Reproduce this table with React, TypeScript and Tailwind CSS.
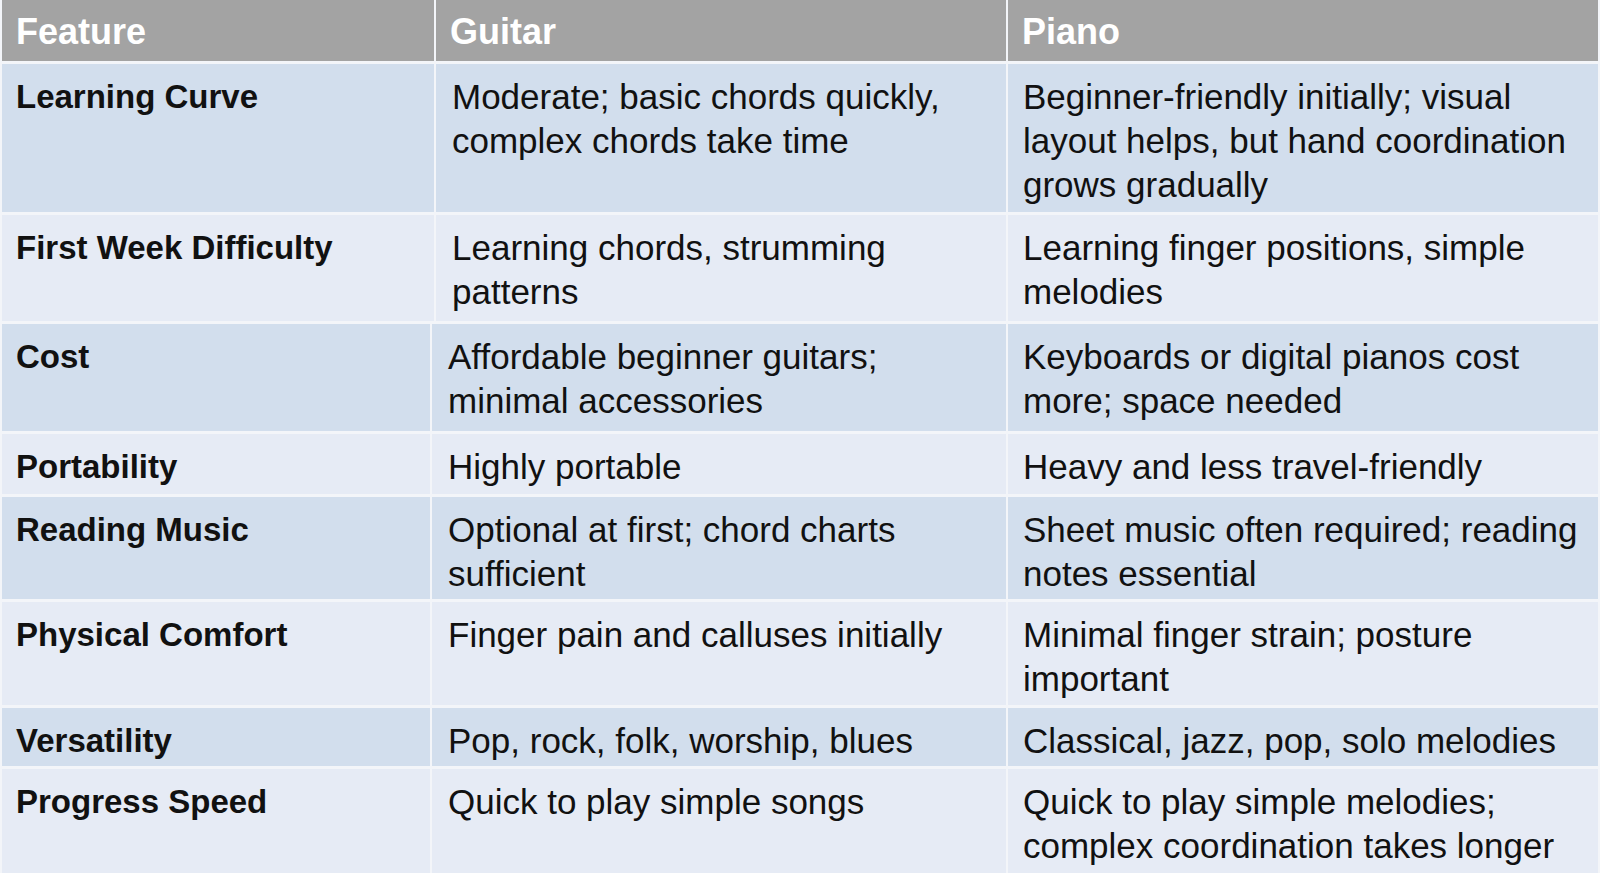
import React from "react";

type Row = {
  label: string;
  guitar: string[];
  piano: string[];
  h: string;
  bg: string;
  narrow?: boolean;
};

const BLUE = "bg-[#d2deed]";
const LIGHT = "bg-[#e6ebf5]";

const rows: Row[] = [
  {
    label: "Learning Curve",
    guitar: ["Moderate; basic chords quickly,", "complex chords take time"],
    piano: [
      "Beginner-friendly initially; visual",
      "layout helps, but hand coordination",
      "grows gradually",
    ],
    h: "h-[148px]",
    bg: BLUE,
  },
  {
    label: "First Week Difficulty",
    guitar: ["Learning chords, strumming", "patterns"],
    piano: ["Learning finger positions, simple", "melodies"],
    h: "h-[106px]",
    bg: LIGHT,
  },
  {
    label: "Cost",
    guitar: ["Affordable beginner guitars;", "minimal accessories"],
    piano: ["Keyboards or digital pianos cost", "more; space needed"],
    h: "h-[107px]",
    bg: BLUE,
    narrow: true,
  },
  {
    label: "Portability",
    guitar: ["Highly portable"],
    piano: ["Heavy and less travel-friendly"],
    h: "h-[60px]",
    bg: LIGHT,
    narrow: true,
  },
  {
    label: "Reading Music",
    guitar: ["Optional at first; chord charts", "sufficient"],
    piano: ["Sheet music often required; reading", "notes essential"],
    h: "h-[102px]",
    bg: BLUE,
    narrow: true,
  },
  {
    label: "Physical Comfort",
    guitar: ["Finger pain and calluses initially"],
    piano: ["Minimal finger strain; posture", "important"],
    h: "h-[103px]",
    bg: LIGHT,
    narrow: true,
  },
  {
    label: "Versatility",
    guitar: ["Pop, rock, folk, worship, blues"],
    piano: ["Classical, jazz, pop, solo melodies"],
    h: "h-[58px]",
    bg: BLUE,
    narrow: true,
  },
  {
    label: "Progress Speed",
    guitar: ["Quick to play simple songs"],
    piano: ["Quick to play simple melodies;", "complex coordination takes longer"],
    h: "flex-1",
    bg: LIGHT,
    narrow: true,
  },
];

function Lines({ lines }: { lines: string[] }) {
  return (
    <>
      {lines.map((l, i) => (
        <div key={i} className="whitespace-nowrap">
          {l}
        </div>
      ))}
    </>
  );
}

export default function App() {
  return (
    <div
      className="w-[1600px] h-[873px] overflow-hidden bg-[#f3f5f9] flex flex-col gap-[3px] px-[2px] text-[#111111]"
      style={{ fontFamily: '"Liberation Sans", Arial, sans-serif' }}
    >
      {/* header */}
      <div className="h-[61px] shrink-0 grid grid-cols-[432px_570px_1fr] gap-[2px]">
        <div className="bg-[#a3a3a3] flex items-center pl-[14px] text-white font-bold text-[36px] leading-[44px] pt-[2px]">
          Feature
        </div>
        <div className="bg-[#a3a3a3] flex items-center pl-[14px] text-white font-bold text-[36px] leading-[44px] pt-[2px]">
          Guitar
        </div>
        <div className="bg-[#a3a3a3] flex items-center pl-[14px] text-white font-bold text-[36px] leading-[44px] pt-[2px]">
          Piano
        </div>
      </div>
      {rows.map((r, i) => (
        <div
          key={i}
          className={`${r.h} shrink-0 grid gap-[2px] ${
            r.narrow ? "grid-cols-[428px_574px_1fr]" : "grid-cols-[432px_570px_1fr]"
          }`}
        >
          <div className={`${r.bg} pl-[14px] pt-[11px] font-bold text-[33px] leading-[44px]`}>
            {r.label}
          </div>
          <div className={`${r.bg} pl-[16px] pt-[11px] text-[35px] leading-[44px]`}>
            <Lines lines={r.guitar} />
          </div>
          <div className={`${r.bg} pl-[15px] pt-[11px] text-[35px] leading-[44px]`}>
            <Lines lines={r.piano} />
          </div>
        </div>
      ))}
    </div>
  );
}
